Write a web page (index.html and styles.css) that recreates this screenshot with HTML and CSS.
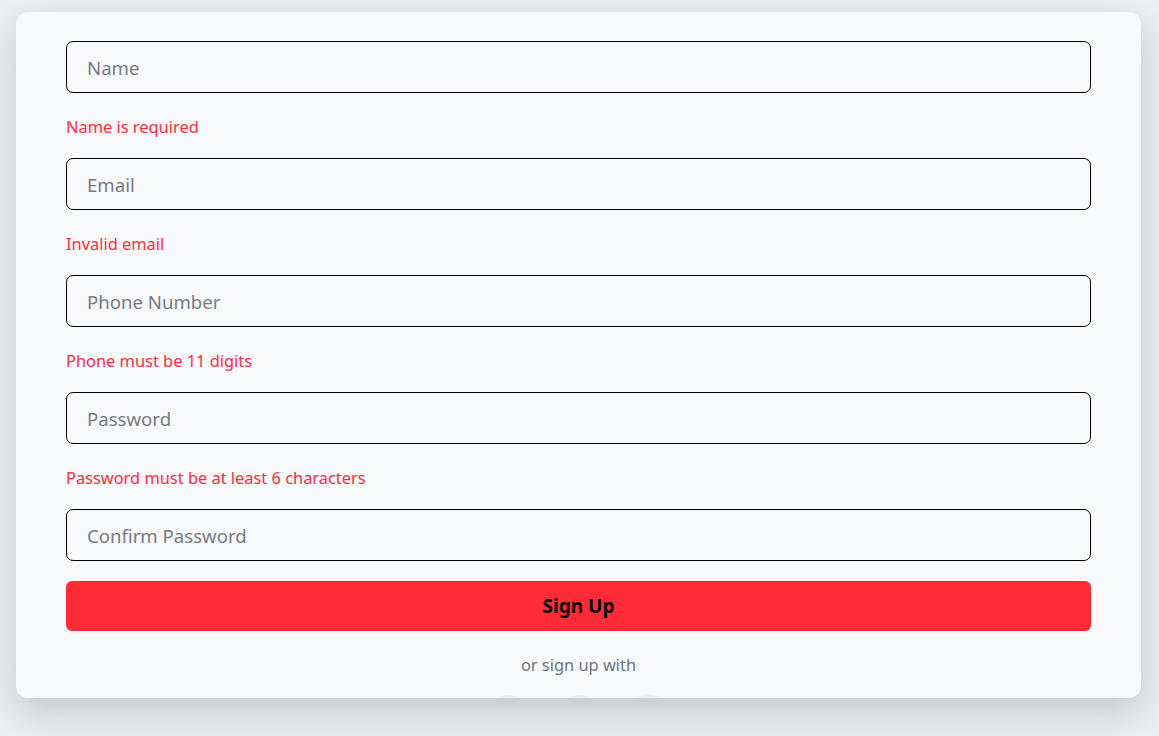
FILE: index.html
```html
<!DOCTYPE html>
<html lang="en">
<head>
<meta charset="utf-8">
<title>Sign Up</title>
<link rel="stylesheet" href="styles.css">
</head>
<body>
<div class="page">
  <div class="card">
    <form class="form">
      <input class="field" type="text" placeholder="Name">
      <p class="error">Name is required</p>
      <input class="field" type="email" placeholder="Email">
      <p class="error">Invalid email</p>
      <input class="field" type="tel" placeholder="Phone Number">
      <p class="error">Phone must be 11 digits</p>
      <input class="field" type="password" placeholder="Password">
      <p class="error">Password must be at least 6 characters</p>
      <input class="field" type="password" placeholder="Confirm Password">
      <button class="submit" type="button">Sign Up</button>
      <p class="alt">or sign up with</p>
      <div class="socials">
        <span class="social"></span>
        <span class="social"></span>
        <span class="social"></span>
      </div>
    </form>
  </div>
</div>
</body>
</html>
```
FILE: styles.css
```css
* { box-sizing: border-box; }
html, body { margin: 0; padding: 0; }
body {
  background: #eeeff1;
  font-family: "Noto Sans", "Open Sans", sans-serif;
  width: 1159px;
  height: 736px;
  overflow: hidden;
}
.page {
  padding: 12px 18px 0 16px;
}
.card {
  height: 686px;
  background: #f8f9fb;
  border-radius: 12px;
  box-shadow: 0 14px 40px rgba(0,0,0,0.18);
  overflow: hidden;
  padding: 29px 50px 0 50px;
}
.form {
  display: flex;
  flex-direction: column;
}
.field {
  height: 52px;
  width: 100%;
  border: 1px solid #000;
  border-radius: 7px;
  background: #f8f9fb;
  padding: 0 20px;
  font-family: inherit;
  font-size: 18.6px;
  color: #212529;
  outline: none;
}
.field::placeholder { color: #777b80; }
.error {
  margin: 22px 0 19px 0;
  font-size: 16.4px;
  line-height: 24px;
  color: #ff2b3b;
}
.submit {
  margin-top: 20px;
  height: 50px;
  border: none;
  border-radius: 6px;
  background: #ff2b37;
  color: #000;
  font-family: inherit;
  font-weight: 700;
  font-size: 19px;
}
.alt {
  margin: 22px 0 0 0;
  text-align: center;
  font-size: 16.4px;
  line-height: 24px;
  color: #6c757d;
}
.socials {
  margin-top: 18px;
  display: flex;
  justify-content: center;
  gap: 20px;
}
.social {
  width: 50px;
  height: 50px;
  border-radius: 50%;
  background: #eceef0;
}
```
